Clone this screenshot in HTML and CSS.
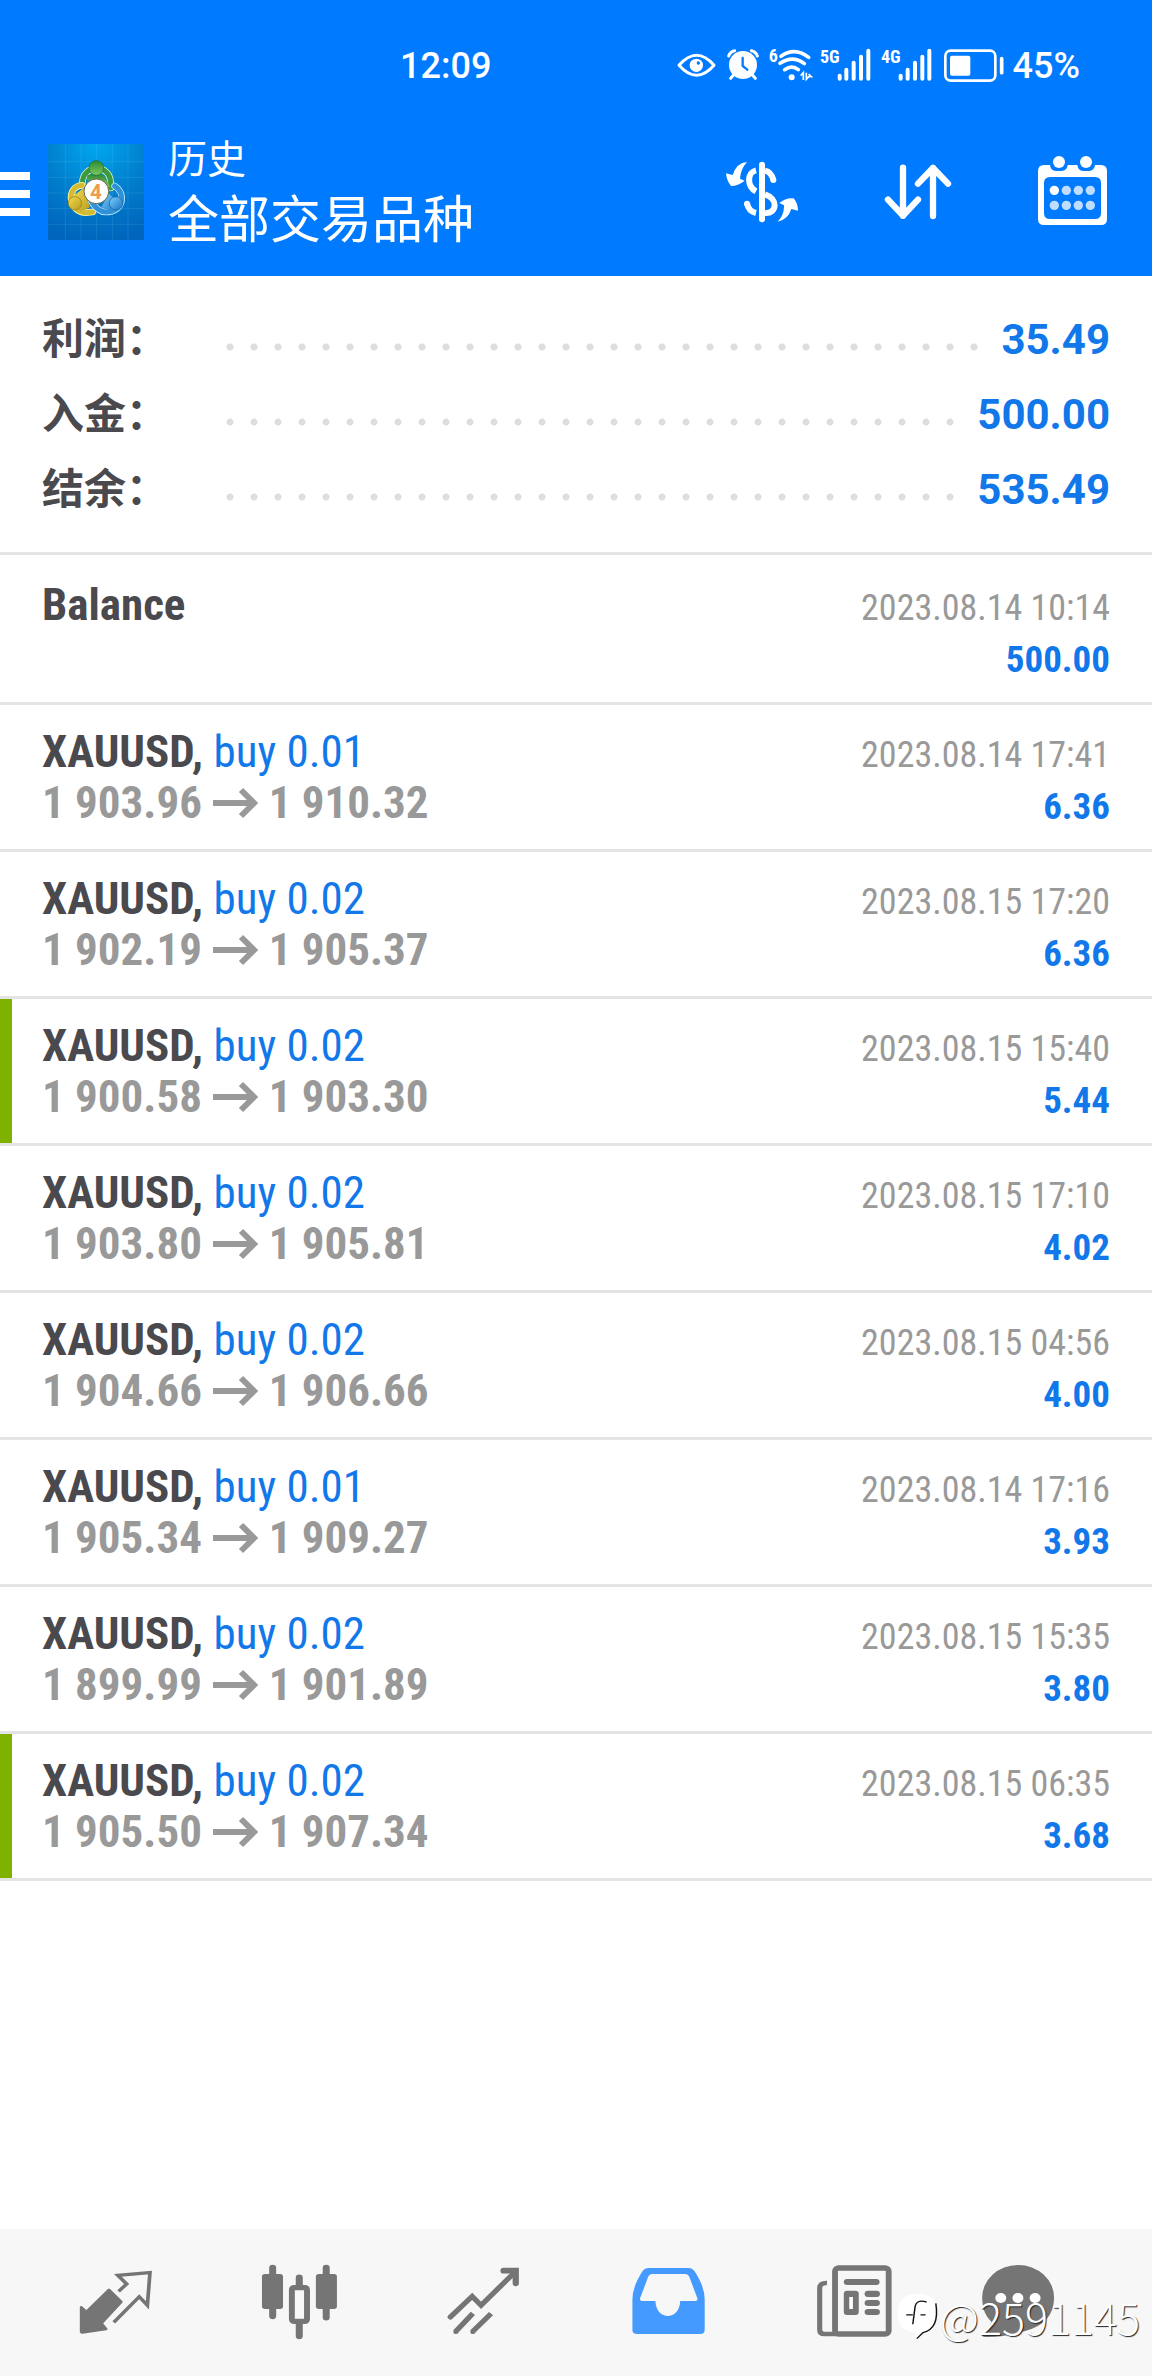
FILE: index.html
```html
<!DOCTYPE html>
<html lang="zh-CN">
<head>
<meta charset="utf-8">
<meta name="viewport" content="width=device-width, initial-scale=1">
<title>历史</title>
<link rel="stylesheet" href="styles.css">
</head>
<body>
<div class="app">
  <header class="top">
    <div class="status">
      <span class="clock">12:09</span>
      <div class="status-icons">
        <svg width="48" height="65" viewBox="39 0 144 195"><path d="M51 94Q104 34 156 94Q104 154 51 94Z" fill="none" stroke="#fff" stroke-width="9" stroke-linejoin="round"/><circle cx="103" cy="94" r="20" fill="#fff"/><circle cx="109" cy="87" r="5" fill="#007aff"/></svg>
        <svg width="40" height="65" viewBox="183 0 120 195"><g stroke="#fff" stroke-width="9" stroke-linecap="round" fill="none"><path d="M200 66Q204 53 218 50M286 66Q282 53 268 50M214 124L206 133M272 124L280 133"/></g><circle cx="243" cy="93" r="42" fill="#fff"/><path d="M242 72V96L256 107" fill="none" stroke="#007aff" stroke-width="7" stroke-linecap="round"/></svg>
        <svg width="54" height="65" viewBox="303 0 162 195"><text class="tiny" x="320" y="83">6</text><g fill="none" stroke="#fff" stroke-width="11" stroke-linecap="round"><path d="M357 67Q398 38 440 70M354 88Q392 62 427 89M368 107Q390 92 409 107"/></g><circle cx="389" cy="130" r="9" fill="#fff"/><path d="M416 125L424 116V138M433 116V136L440 128H448L440 120" fill="none" stroke="#fff" stroke-width="5"/></svg>
        <svg width="60" height="65" viewBox="465 0 180 195"><text class="tiny" x="474" y="88">5G</text><path d="M533 125V134M553 107V134M575 86V134M597 68V134M619 50V134" stroke="#fff" stroke-width="12" stroke-linecap="round"/></svg>
        <svg width="62" height="65" viewBox="645 0 186 195"><text class="tiny" x="657" y="88">4G</text><path d="M716 125V134M737 107V134M759 86V134M781 68V134M802 50V134" stroke="#fff" stroke-width="12" stroke-linecap="round"/></svg>
        <svg width="70" height="65" viewBox="831 0 210 195"><rect x="850" y="50" width="150" height="90" rx="16" fill="none" stroke="#fff" stroke-width="8"/><rect x="864" y="65" width="61" height="60" rx="6" fill="#fff"/><path d="M1019 74V116" stroke="#fff" stroke-width="11" stroke-linecap="round"/></svg>
      </div>
      <span class="percent">45%</span>
    </div>
    <div class="bar">
      <button class="menu" aria-label="菜单"><span></span><span></span><span></span></button>
      <svg class="logo" viewBox="144 72 288 288">
        <defs>
          <radialGradient id="sky" cx=".5" cy="0" r="1"><stop offset="0" stop-color="#00a8f0"/><stop offset=".55" stop-color="#007dcc"/><stop offset="1" stop-color="#0066bd"/></radialGradient>
          <linearGradient id="gr" x2="0" y2="1"><stop stop-color="#2f8a34"/><stop offset="1" stop-color="#7cc860"/></linearGradient>
          <linearGradient id="ye" x2="1" y2="1"><stop stop-color="#f3dd4a"/><stop offset="1" stop-color="#b99b22"/></linearGradient>
          <linearGradient id="bl" x2="1" y2="1"><stop stop-color="#7fd0fa"/><stop offset="1" stop-color="#1674c4"/></linearGradient>
        </defs>
        <rect x="144" y="72" width="288" height="288" fill="url(#sky)"/>
        <path d="M196 72V360M243 72V360M290 72V360M337 72V360M384 72V360M144 125H432M144 172H432M144 219H432M144 266H432M144 313H432" stroke="#8fe0ff" stroke-opacity=".13" stroke-width="3"/>
        <g fill="none" stroke-linecap="round">
          <path d="M247 190C248 130 332 130 332 190V204" stroke="#d9f3d0" stroke-width="20"/><path d="M247 190C248 130 332 130 332 190V204" stroke="#3c9a3d" stroke-width="15"/>
          <path d="M246 196C196 200 206 278 258 278L278 276" stroke="#fff3a8" stroke-width="20"/><path d="M246 196C196 200 206 278 258 278L278 276" stroke="#d3bb32" stroke-width="15"/>
          <path d="M344 198C380 220 370 276 318 276Q292 276 274 244" stroke="#c6ecff" stroke-width="20"/><path d="M344 198C380 220 370 276 318 276Q292 276 274 244" stroke="#2f92d8" stroke-width="15"/>
        </g>
        <path d="M262 166Q290 160 312 166L330 200L300 200L262 180Z" fill="url(#gr)"/>
        <path d="M220 228L250 205L270 262L240 276Z" fill="url(#ye)"/>
        <path d="M304 262L326 220L354 246L330 272Z" fill="url(#bl)"/>
        <circle cx="289" cy="144" r="22" fill="url(#gr)" stroke="#176b28" stroke-width="2"/><circle cx="225" cy="250" r="20" fill="url(#ye)" stroke="#8d7615" stroke-width="2"/><circle cx="348" cy="250" r="20" fill="url(#bl)" stroke="#0e579b" stroke-width="2"/>
        <circle cx="289" cy="214" r="37" fill="#fff" stroke="#6b6a4d" stroke-width="3"/>
        <text class="four" x="288" y="237" text-anchor="middle">4</text>
      </svg>
      <h1 class="title"><span class="title-small">历史</span><span class="title-large">全部交易品种</span></h1>
      <div class="actions">
        <button aria-label="货币"><svg viewBox="42 42 288 288"><path d="M186 104V268" stroke="#fff" stroke-width="18" stroke-linecap="round"/><path d="M168 121C141 127 140 169 168 184M195 122Q214 126 220 150M141 220Q146 244 168 249M195 193C236 206 231 252 195 249" fill="none" stroke="#fff" stroke-width="18"/><circle cx="220" cy="150" r="9" fill="#fff"/><circle cx="141" cy="221" r="9" fill="#fff"/><path d="M141 96Q110 98 98 135L78 130Q80 153 93 168Q114 168 134 152L120 146Q121 119 141 96ZM233 275Q253 254 252 226L238 219Q258 202 281 205Q294 221 294 242L274 237Q264 269 233 275Z" fill="#fff"/></svg></button>
        <button aria-label="排序"><svg viewBox="510 42 288 288"><path d="M609 113V257M564 209L609 257L654 209M699 258V114M654 161L699 114L744 161" fill="none" stroke="#fff" stroke-width="19" stroke-linecap="round" stroke-linejoin="round"/></svg></button>
        <button aria-label="日期"><svg viewBox="978 42 288 288"><path fill-rule="evenodd" fill="#fff" d="M1032 105H1050Q1052 123 1070 123H1084Q1102 122 1103 105H1132Q1134 123 1152 123H1166Q1184 122 1185 105H1203Q1221 105 1221 123V267Q1221 285 1203 285H1032Q1014 285 1014 267V123Q1014 105 1032 105ZM1050 141Q1032 141 1032 159V249Q1032 267 1050 267H1185Q1203 267 1203 249V159Q1203 141 1185 141Z"/><g fill="#fff"><circle cx="1077" cy="96" r="18"/><circle cx="1158" cy="96" r="18"/><circle cx="1063" cy="181" r="14"/><g opacity=".75"><circle cx="1099" cy="181" r="14"/><circle cx="1135" cy="181" r="14"/><circle cx="1171" cy="181" r="14"/><circle cx="1063" cy="226" r="14"/><circle cx="1099" cy="226" r="14"/><circle cx="1135" cy="226" r="14"/><circle cx="1171" cy="226" r="14"/></g></g></svg></button>
      </div>
    </div>
  </header>

  <main>
    <dl class="summary">
      <div class="sum-row"><dt>利润：</dt><dd><i class="dots"></i>35.49</dd></div>
      <div class="sum-row"><dt>入金：</dt><dd><i class="dots"></i>500.00</dd></div>
      <div class="sum-row"><dt>结余：</dt><dd><i class="dots"></i>535.49</dd></div>
    </dl>
    <ul class="deals">
      <li class="deal balance"><div><b>Balance</b></div><div class="right"><time>2023.08.14 10:14</time><strong>500.00</strong></div></li>
      <li class="deal"><div><b>XAUUSD,</b> <span class="side">buy 0.01</span><p class="price">1 903.96 <svg class="arrow" viewBox="0 0 44 30"><path d="M0 15H40M28 2L41 15L28 28"/></svg> 1 910.32</p></div><div class="right"><time>2023.08.14 17:41</time><strong>6.36</strong></div></li>
      <li class="deal"><div><b>XAUUSD,</b> <span class="side">buy 0.02</span><p class="price">1 902.19 <svg class="arrow" viewBox="0 0 44 30"><path d="M0 15H40M28 2L41 15L28 28"/></svg> 1 905.37</p></div><div class="right"><time>2023.08.15 17:20</time><strong>6.36</strong></div></li>
      <li class="deal marked"><div><b>XAUUSD,</b> <span class="side">buy 0.02</span><p class="price">1 900.58 <svg class="arrow" viewBox="0 0 44 30"><path d="M0 15H40M28 2L41 15L28 28"/></svg> 1 903.30</p></div><div class="right"><time>2023.08.15 15:40</time><strong>5.44</strong></div></li>
      <li class="deal"><div><b>XAUUSD,</b> <span class="side">buy 0.02</span><p class="price">1 903.80 <svg class="arrow" viewBox="0 0 44 30"><path d="M0 15H40M28 2L41 15L28 28"/></svg> 1 905.81</p></div><div class="right"><time>2023.08.15 17:10</time><strong>4.02</strong></div></li>
      <li class="deal"><div><b>XAUUSD,</b> <span class="side">buy 0.02</span><p class="price">1 904.66 <svg class="arrow" viewBox="0 0 44 30"><path d="M0 15H40M28 2L41 15L28 28"/></svg> 1 906.66</p></div><div class="right"><time>2023.08.15 04:56</time><strong>4.00</strong></div></li>
      <li class="deal"><div><b>XAUUSD,</b> <span class="side">buy 0.01</span><p class="price">1 905.34 <svg class="arrow" viewBox="0 0 44 30"><path d="M0 15H40M28 2L41 15L28 28"/></svg> 1 909.27</p></div><div class="right"><time>2023.08.14 17:16</time><strong>3.93</strong></div></li>
      <li class="deal"><div><b>XAUUSD,</b> <span class="side">buy 0.02</span><p class="price">1 899.99 <svg class="arrow" viewBox="0 0 44 30"><path d="M0 15H40M28 2L41 15L28 28"/></svg> 1 901.89</p></div><div class="right"><time>2023.08.15 15:35</time><strong>3.80</strong></div></li>
      <li class="deal marked"><div><b>XAUUSD,</b> <span class="side">buy 0.02</span><p class="price">1 905.50 <svg class="arrow" viewBox="0 0 44 30"><path d="M0 15H40M28 2L41 15L28 28"/></svg> 1 907.34</p></div><div class="right"><time>2023.08.15 06:35</time><strong>3.68</strong></div></li>
    </ul>
  </main>

  <nav class="tabs">
    <button aria-label="报价"><svg preserveAspectRatio="none" viewBox="184 126 260 288"><path d="M295 210L328 246L274 310L287 327L223 337Q220 338 220 333V262L234 276Z" fill="#757575" stroke="#757575" stroke-width="8" stroke-linejoin="round"/><path d="M321 214L343 192L319 166L406 158L399 256L377 230L308 307" fill="none" stroke="#757575" stroke-width="10"/></svg></button>
    <button aria-label="图表"><svg preserveAspectRatio="none" viewBox="681 126 260 288"><path d="M737 144V288M882 144V292M809 173V200M809 306V348" stroke="#757575" stroke-width="19" stroke-linecap="round"/><rect x="708" y="162" width="57" height="105" rx="8" fill="#757575"/><rect x="854" y="162" width="57" height="105" rx="8" fill="#757575"/><rect x="789" y="203" width="41" height="101" rx="6" fill="#f7f7f7" stroke="#757575" stroke-width="16"/></svg></button>
    <button aria-label="交易"><svg preserveAspectRatio="none" viewBox="1179 126 260 288"><g fill="none" stroke="#757575" stroke-width="15"><path d="M1218 291L1277 229L1301 256L1392 157" stroke-linecap="round"/><path d="M1362 152H1395V190" stroke-width="17" stroke-linecap="round"/><path d="M1279 280L1232 335M1328 281L1278 335"/></g><circle cx="1233" cy="335" r="7" fill="#757575"/><circle cx="1279" cy="335" r="7" fill="#757575"/></svg></button>
    <button aria-label="历史" aria-current="page"><svg preserveAspectRatio="none" viewBox="110 126 263 288"><path fill="#449aff" fill-rule="evenodd" d="M187 144H299Q308 144 314 153Q342 200 342 238V329Q342 342 329 342H157Q144 342 144 329V238Q144 200 172 153Q178 144 187 144ZM199 162Q190 162 187 171L165 235Q163 243 171 243H207C209 303 273 303 275 243H316Q324 243 322 235L300 171Q297 162 288 162Z"/></svg></button>
    <button aria-label="新闻"><svg preserveAspectRatio="none" viewBox="614 126 263 288"><g fill="none" stroke="#757575" stroke-width="16"><rect x="699" y="144" width="147" height="198" rx="10"/><path d="M677 189Q657 188 657 205V330Q657 342 670 342H705" stroke-width="14"/></g><rect x="723" y="177" width="98" height="18" rx="9" fill="#757575"/><rect x="723" y="212" width="41" height="73" rx="9" fill="#757575"/><rect x="738" y="231" width="10" height="36" fill="#fff"/><g fill="#757575"><rect x="780" y="212" width="42" height="19" rx="9"/><rect x="780" y="240" width="42" height="18" rx="9"/><rect x="780" y="267" width="42" height="18" rx="9"/></g></svg></button>
    <button aria-label="消息"><svg preserveAspectRatio="none" viewBox="1118 126 263 288"><path d="M1200 135A98 98 0 0 1 1299 234Q1298 310 1220 333Q1165 352 1110 351Q1099 350 1105 342L1128 307Q1102 280 1102 234A98 98 0 0 1 1200 135Z" fill="#757575"/><g fill="#fff"><circle cx="1153" cy="234" r="15"/><circle cx="1200" cy="234" r="15"/><circle cx="1247" cy="234" r="15"/></g></svg></button>
  </nav>
  <div class="watermark"><svg preserveAspectRatio="none" width="42" height="48" viewBox="876 216 115 143"><path d="M936 222Q990 222 990 275Q990 330 952 339L934 357L926 338Q880 330 880 277Q882 222 936 222Z" fill="#fff"/><path d="M985 250Q996 325 950 337L933 355M960 246Q931 236 928 262L922 312M904 284H922M943 284H957" fill="none" stroke="#111" stroke-width="4"/></svg><span>@2591145</span></div>
</div>
</body>
</html>
```
FILE: styles.css
```css
* { box-sizing: border-box; margin: 0; padding: 0; }
body { background: #fff; font-family: Roboto, "Noto Sans CJK SC", sans-serif; }
button { border: 0; background: none; display: block; }
svg { display: block; overflow: visible; }
ul { list-style: none; }

.app { position: relative; min-height: 100vh; display: flex; flex-direction: column; }
main { flex: 1; }

.top { background: #007aff; color: #fff; }
.status { display: flex; align-items: center; height: 132px; padding: 0 72px 0 400px; font-size: 36px; font-weight: 500; }
.status-icons { display: flex; margin-left: auto; }
.percent { margin-left: 4px; }
.tiny { font: 700 54px "Roboto Condensed", "Liberation Sans Narrow", sans-serif; fill: #fff; }

.bar { display: flex; align-items: flex-start; height: 144px; padding-right: 30px; }
.menu { width: 30px; display: grid; gap: 10px; margin-top: 40px; }
.menu span { height: 8px; background: #fff; }
.logo { width: 96px; height: 96px; margin: 12px 24px 0 18px; }
.four { font: 700 62px Roboto, sans-serif; fill: #f09a4c; }
.title { font-weight: 400; flex: 1; padding-top: 2px; }
.title span { display: block; }
.title-small { font-size: 39px; line-height: 52px; }
.title-large { font-size: 51px; line-height: 70px; }
.actions { display: flex; gap: 60px; margin-top: 12px; }
.actions svg { width: 96px; height: 96px; }

.summary { padding: 26px 42px 25px; border-bottom: 3px solid #e4e4e4; font-size: 42px; font-weight: 700; }
.sum-row { display: flex; line-height: 75px; }
.sum-row dt { flex: 0 0 184px; color: #4a494e; }
.sum-row dd { flex: 1; display: flex; color: #1278ea; }
.dots { flex: 1; margin-right: 16px; background: radial-gradient(circle at 4px 45px, #dedede 3px, transparent 4px) 0 0 / 24px 75px repeat-x; }

.deal { display: flex; justify-content: space-between; align-items: baseline; padding: 21px 42px; border-bottom: 3px solid #e4e4e4; font: 45px/51px "Roboto Condensed", "Liberation Sans Narrow", sans-serif; color: #4a494e; }
.balance { padding-top: 24px; }
.marked { background: linear-gradient(#7fb200, #7fb200) 0 0 / 12px 100% no-repeat; }
.deal { height: 147px; }
.deal.balance { height: 150px; }
.side { color: #1278ea; }
.price { color: #999; font-weight: 700; }
.arrow { display: inline-block; width: 44px; height: 30px; margin: 0 1px; fill: none; stroke: #999; stroke-width: 6; }
.right { font-size: 37px; text-align: right; color: #999; }
.right time, .right strong { display: block; }
.right time { font-size: 36px; }
.right strong { color: #1278ea; }

.tabs { display: grid; grid-template-columns: repeat(6, 1fr); justify-items: center; padding: 33px 24px 18px; background: #f7f7f7; }
.tabs svg { width: 96px; height: 96px; }

.watermark { position: absolute; right: 12px; bottom: 36px; display: flex; align-items: center; gap: 2px; color: #fff; font: 300 43px/48px "Noto Sans CJK SC", sans-serif; text-shadow: 1px 1px 1px #222; }
```
